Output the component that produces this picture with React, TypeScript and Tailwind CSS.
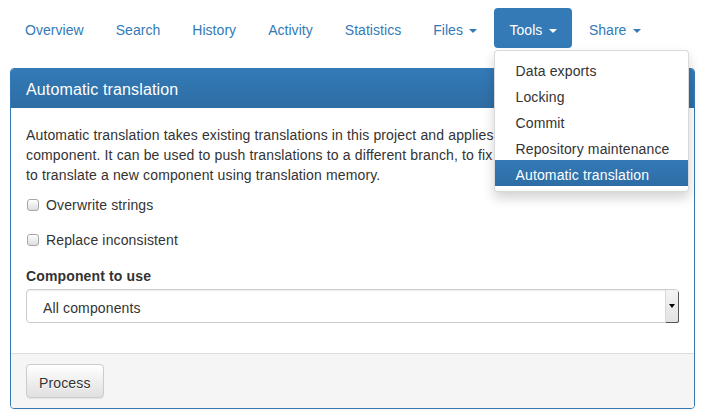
import React from "react";

const Caret = ({ className = "" }: { className?: string }) => (
  <span
    className={`inline-block ml-[6.5px] align-middle w-0 h-0 border-t-[4px] border-x-[4px] border-x-transparent ${className}`}
  />
);

const navItems = ["Overview", "Search", "History", "Activity", "Statistics"];
const toolItems = ["Data exports", "Locking", "Commit", "Repository maintenance", "Automatic translation"];

const Check = ({ label, className = "" }: { label: string; className?: string }) => (
  <label className={`flex items-center h-[20px] pt-[2px] ${className}`}>
    <input
      type="checkbox"
      className="appearance-none w-[12px] h-[12px] ml-[1px] mr-[7px] rounded-[3px] border border-[#a6a6a6] bg-gradient-to-b from-[#fdfdfd] to-[#dedede] shadow-[inset_0_1px_0_#fff]"
    />
    <span>{label}</span>
  </label>
);

export default function App() {
  return (
    <div
      className="w-[707px] h-[418px] bg-white text-[14px] leading-[20px] tracking-[0.14px] text-[#333]"
      style={{ fontFamily: '"Liberation Sans", Arial, sans-serif' }}
    >
      <div className="pl-[10px] pr-[12px] pt-[8px]">
        {/* Nav pills */}
        <ul className="flex gap-[2px] tracking-[0.04px]">
          {navItems.map((n) => (
            <li key={n}>
              <a className="block px-[15px] pt-[12px] pb-[8px] rounded-[4px] text-[#337ab7]">{n}</a>
            </li>
          ))}
          <li>
            <a className="block px-[15px] pt-[12px] pb-[8px] rounded-[4px] text-[#337ab7]">
              Files
              <Caret className="border-t-[#337ab7]" />
            </a>
          </li>
          <li className="relative">
            <a className="block px-[15px] pt-[12px] pb-[8px] rounded-[4px] bg-[#337ab7] text-white">
              Tools
              <Caret className="border-t-white" />
            </a>
            <ul className="absolute left-0 top-full mt-[2px] z-10 w-[195px] py-[5px] bg-white border border-black/15 rounded-[4px] shadow-[0_6px_12px_rgba(0,0,0,0.175)] whitespace-nowrap tracking-[0.14px]">
              {toolItems.map((t) =>
                t === "Automatic translation" ? (
                  <li key={t}>
                    <a className="block px-[20px] pt-[5px] pb-[1px] text-white bg-gradient-to-b from-[#337ab7] to-[#2e6da4]">{t}</a>
                  </li>
                ) : (
                  <li key={t}>
                    <a className="block px-[20px] pt-[5px] pb-[1px] text-[#333]">{t}</a>
                  </li>
                )
              )}
            </ul>
          </li>
          <li>
            <a className="block px-[15px] pt-[12px] pb-[8px] rounded-[4px] text-[#337ab7]">
              Share
              <Caret className="border-t-[#337ab7]" />
            </a>
          </li>
        </ul>

        {/* Panel */}
        <div className="mt-[20px] border border-[#337ab7] rounded-[4px] shadow-[0_1px_2px_rgba(0,0,0,0.05)]">
          <div className="px-[15px] pt-[11px] pb-[9px] text-[16px] leading-[19px] text-white bg-gradient-to-b from-[#337ab7] to-[#2e6da4] rounded-t-[3px]">
            Automatic translation
          </div>
          <div className="px-[15px] pt-[17px] pb-[30px]">
            <p className="mb-[9px] overflow-hidden">
              <span className="block whitespace-nowrap">
                Automatic translation takes existing translations in this project and applies them to the current
              </span>
              <span className="block whitespace-nowrap">
                component. It can be used to push translations to a different branch, to fix inconsistent ones or
              </span>
              <span className="block whitespace-nowrap">
                to translate a new component using translation memory.
              </span>
            </p>
            <Check label="Overwrite strings" />
            <Check label="Replace inconsistent" className="mt-[15px]" />
            <div className="mt-[15px] pt-[2px] font-bold">Component to use</div>
            <div className="mt-[3px] h-[34px] border border-[#ccc] rounded-[4px] shadow-[inset_0_1px_1px_rgba(0,0,0,0.075)] flex items-stretch">
              <span className="flex-1 pl-[16px] pt-[3px] flex items-center">All components</span>
              <span className="w-[13px] bg-gradient-to-b from-[#f4f4f4] to-[#e2e2e2] border-l border-[#d8d8d8] shadow-[1px_1px_0_#555] flex items-center justify-center rounded-r-[2px]">
                <span className="w-0 h-0 border-t-[4px] border-x-[3px] border-x-transparent border-t-black" />
              </span>
            </div>
          </div>
          <div className="px-[15px] py-[10px] bg-[#f5f5f5] border-t border-[#ddd] rounded-b-[3px]">
            <button className="px-[12px] pt-[8px] pb-[4px] border border-[#ccc] rounded-[4px] bg-gradient-to-b from-white to-[#e0e0e0] text-[#333] [text-shadow:0_1px_0_#fff] shadow-[inset_0_1px_0_rgba(255,255,255,0.15),0_1px_1px_rgba(0,0,0,0.075)]">
              Process
            </button>
          </div>
        </div>
      </div>
    </div>
  );
}
